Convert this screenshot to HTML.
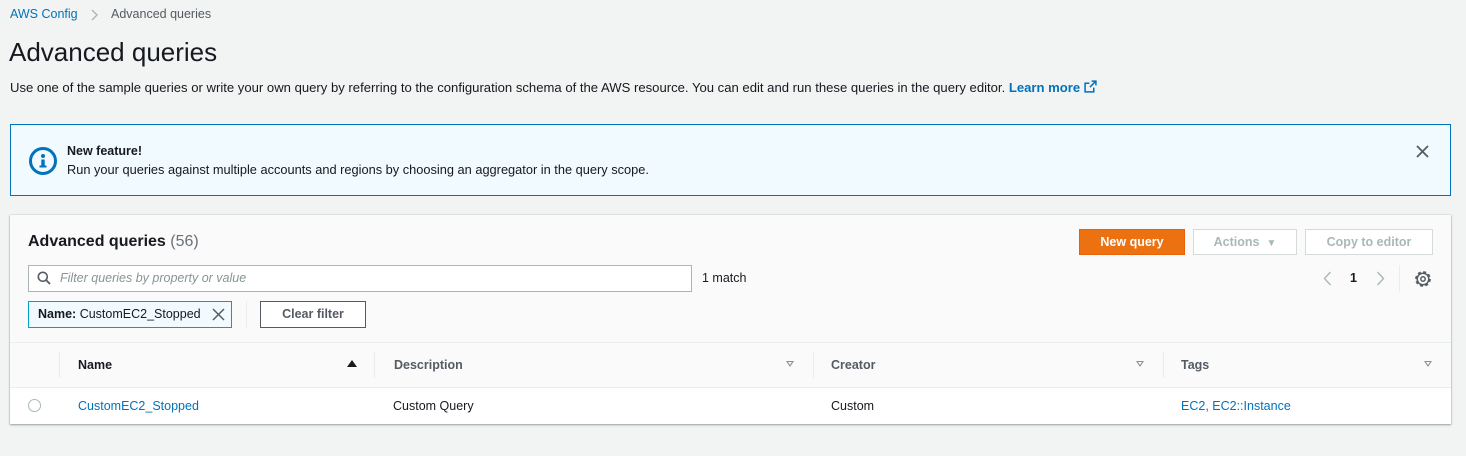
<!DOCTYPE html>
<html><head><style>
*{box-sizing:border-box;margin:0;padding:0}
body{width:1466px;height:456px;background:#f2f3f3;font-family:"Liberation Sans",sans-serif;color:#16191f;position:relative;overflow:hidden;font-size:13px}
.a{position:absolute;white-space:nowrap}
.link{color:#0073bb}
.btn{position:absolute;border:1px solid #d5dbdb;background:#fff;font-weight:bold;color:#aab7b8;text-align:center;font-size:12.5px;line-height:24px}
.th{position:absolute;top:358px;font-weight:bold;color:#545b64;font-size:12.5px}
.sep{position:absolute;top:352px;width:1px;height:26px;background:#e9ebed}
.tri{position:absolute;top:361px;width:0;height:0;border-left:4px solid transparent;border-right:4px solid transparent;border-top:6px solid #879596}
.tri:after{content:"";position:absolute;left:-2px;top:-5px;border-left:2px solid transparent;border-right:2px solid transparent;border-top:3px solid #f9f9f9}
</style></head><body>
<div class="a link" style="left:10px;top:7px;font-size:12.5px">AWS Config</div>
<svg class="a" style="left:91px;top:9px" width="8" height="12" viewBox="0 0 8 12"><path d="M1 1l5 5-5 5" fill="none" stroke="#aab7b8" stroke-width="1.4"/></svg>
<div class="a" style="left:111px;top:7px;color:#545b64;font-size:12.5px">Advanced queries</div>
<div class="a" style="left:9px;top:37px;font-size:26px">Advanced queries</div>
<div class="a" style="left:10px;top:80px;font-size:13.1px">Use one of the sample queries or write your own query by referring to the configuration schema of the AWS resource. You can edit and run these queries in the query editor. <span class="link" style="font-weight:bold">Learn more</span> <svg width="13" height="13" viewBox="0 0 12 12" style="vertical-align:-1px"><path d="M7 1h4v4M11 1L5.5 6.5M9 7v4H1V3h4" fill="none" stroke="#0073bb" stroke-width="1.4"/></svg></div>

<div class="a" style="left:10px;top:124px;width:1441px;height:72px;background:#f1faff;border:1px solid #0073bb"></div>
<svg class="a" style="left:28px;top:146px" width="30" height="30" viewBox="0 0 30 30"><circle cx="15" cy="15" r="12.5" fill="none" stroke="#0073bb" stroke-width="3"/><circle cx="15" cy="10" r="2" fill="#0073bb"/><rect x="13.3" y="13.5" width="3.4" height="7.5" fill="#0073bb"/><rect x="11.5" y="19.5" width="7" height="2" fill="#0073bb"/></svg>
<div class="a" style="left:67px;top:144px;font-weight:bold;font-size:12.5px">New feature!</div>
<div class="a" style="left:67px;top:162px;font-size:12.8px">Run your queries against multiple accounts and regions by choosing an aggregator in the query scope.</div>
<svg class="a" style="left:1416px;top:145px" width="13" height="13" viewBox="0 0 13 13"><path d="M1 1L12 12M12 1L1 12" stroke="#545b64" stroke-width="1.8"/></svg>

<div class="a" style="left:10px;top:215px;width:1441px;height:209px;background:#fafafa;box-shadow:0 1px 2px rgba(0,28,36,.35),0 0 1px rgba(0,28,36,.3)"></div>
<div class="a" style="left:10px;top:342px;width:1441px;height:1px;background:#eaeded"></div>
<div class="a" style="left:10px;top:387px;width:1441px;height:37px;background:#fff;border-top:1px solid #eaeded"></div>
<div class="a" style="left:28px;top:233px;font-size:16px;font-weight:bold">Advanced queries <span style="font-weight:normal;color:#687078">(56)</span></div>
<div class="a" style="left:1079px;top:229px;width:106px;height:26px;background:#ec7211;border:1px solid #eb5f07;color:#fff;font-weight:bold;text-align:center;line-height:24px;font-size:12.5px">New query</div>
<div class="btn" style="left:1193px;top:229px;width:104px;height:26px">Actions &nbsp;<span style="font-size:10px">▼</span></div>
<div class="btn" style="left:1305px;top:229px;width:128px;height:26px">Copy to editor</div>
<div class="a" style="left:28px;top:265px;width:664px;height:27px;background:#fff;border:1px solid #aab7b8"></div>
<svg class="a" style="left:37px;top:271px" width="14" height="14" viewBox="0 0 14 14"><circle cx="5.8" cy="5.8" r="4.5" fill="none" stroke="#545b64" stroke-width="1.6"/><path d="M9 9l4 4" stroke="#545b64" stroke-width="1.8"/></svg>
<div class="a" style="left:60px;top:271px;font-style:italic;color:#879596;font-size:12.5px">Filter queries by property or value</div>
<div class="a" style="left:702px;top:271px;font-size:12.5px">1 match</div>
<svg class="a" style="left:1323px;top:271px" width="9" height="15" viewBox="0 0 9 15"><path d="M7.5 1L1.5 7.5l6 6.5" fill="none" stroke="#aab7b8" stroke-width="1.4"/></svg>
<div class="a" style="left:1350px;top:271px;font-weight:bold;font-size:12.5px">1</div>
<svg class="a" style="left:1376px;top:271px" width="9" height="15" viewBox="0 0 9 15"><path d="M1.5 1l6 6.5-6 6.5" fill="none" stroke="#aab7b8" stroke-width="1.4"/></svg>
<div class="a" style="left:1399px;top:265px;width:1px;height:27px;background:#eaeded"></div>
<svg class="a" style="left:1414px;top:270px" width="18" height="18" viewBox="0 0 18 18"><circle cx="9" cy="9" r="6.5" fill="none" stroke="#545b64" stroke-width="2.8" stroke-dasharray="2.8 2.3"/><circle cx="9" cy="9" r="5.8" fill="none" stroke="#545b64" stroke-width="1.5"/><circle cx="9" cy="9" r="2.2" fill="none" stroke="#545b64" stroke-width="1.5"/></svg>
<div class="a" style="left:28px;top:301px;width:204px;height:27px;background:#f1faff;border:1px solid #00a1c9"></div>
<div class="a" style="left:38px;top:307px;font-size:12.5px"><b>Name:</b> CustomEC2_Stopped</div>
<svg class="a" style="left:212px;top:308px" width="13" height="13" viewBox="0 0 13 13"><path d="M1 1L12 12M12 1L1 12" stroke="#545b64" stroke-width="1.5"/></svg>
<div class="a" style="left:246px;top:301px;width:1px;height:27px;background:#eaeded"></div>
<div class="a" style="left:260px;top:301px;width:106px;height:27px;background:#fff;border:1px solid #545b64;text-align:center;line-height:25px;font-weight:bold;color:#545b64;font-size:12.5px">Clear filter</div>
<div class="sep" style="left:59px"></div>
<div class="sep" style="left:374px"></div>
<div class="sep" style="left:813px"></div>
<div class="sep" style="left:1163px"></div>
<div class="th" style="left:78px;color:#16191f">Name</div>
<div class="a" style="left:347px;top:360px;border-left:5px solid transparent;border-right:5px solid transparent;border-bottom:7px solid #16191f"></div>
<div class="th" style="left:394px">Description</div>
<div class="tri" style="left:786px"></div>
<div class="th" style="left:831px">Creator</div>
<div class="tri" style="left:1136px"></div>
<div class="th" style="left:1181px">Tags</div>
<div class="tri" style="left:1424px"></div>
<div class="a" style="left:28px;top:399px;width:13px;height:13px;border:1px solid #aab7b8;border-radius:50%;background:#fff"></div>
<div class="a link" style="left:78px;top:399px;font-size:12.5px">CustomEC2_Stopped</div>
<div class="a" style="left:393px;top:399px;font-size:12.5px">Custom Query</div>
<div class="a" style="left:831px;top:399px;font-size:12.5px">Custom</div>
<div class="a link" style="left:1181px;top:399px;font-size:12.5px">EC2, EC2::Instance</div>
</body></html>
